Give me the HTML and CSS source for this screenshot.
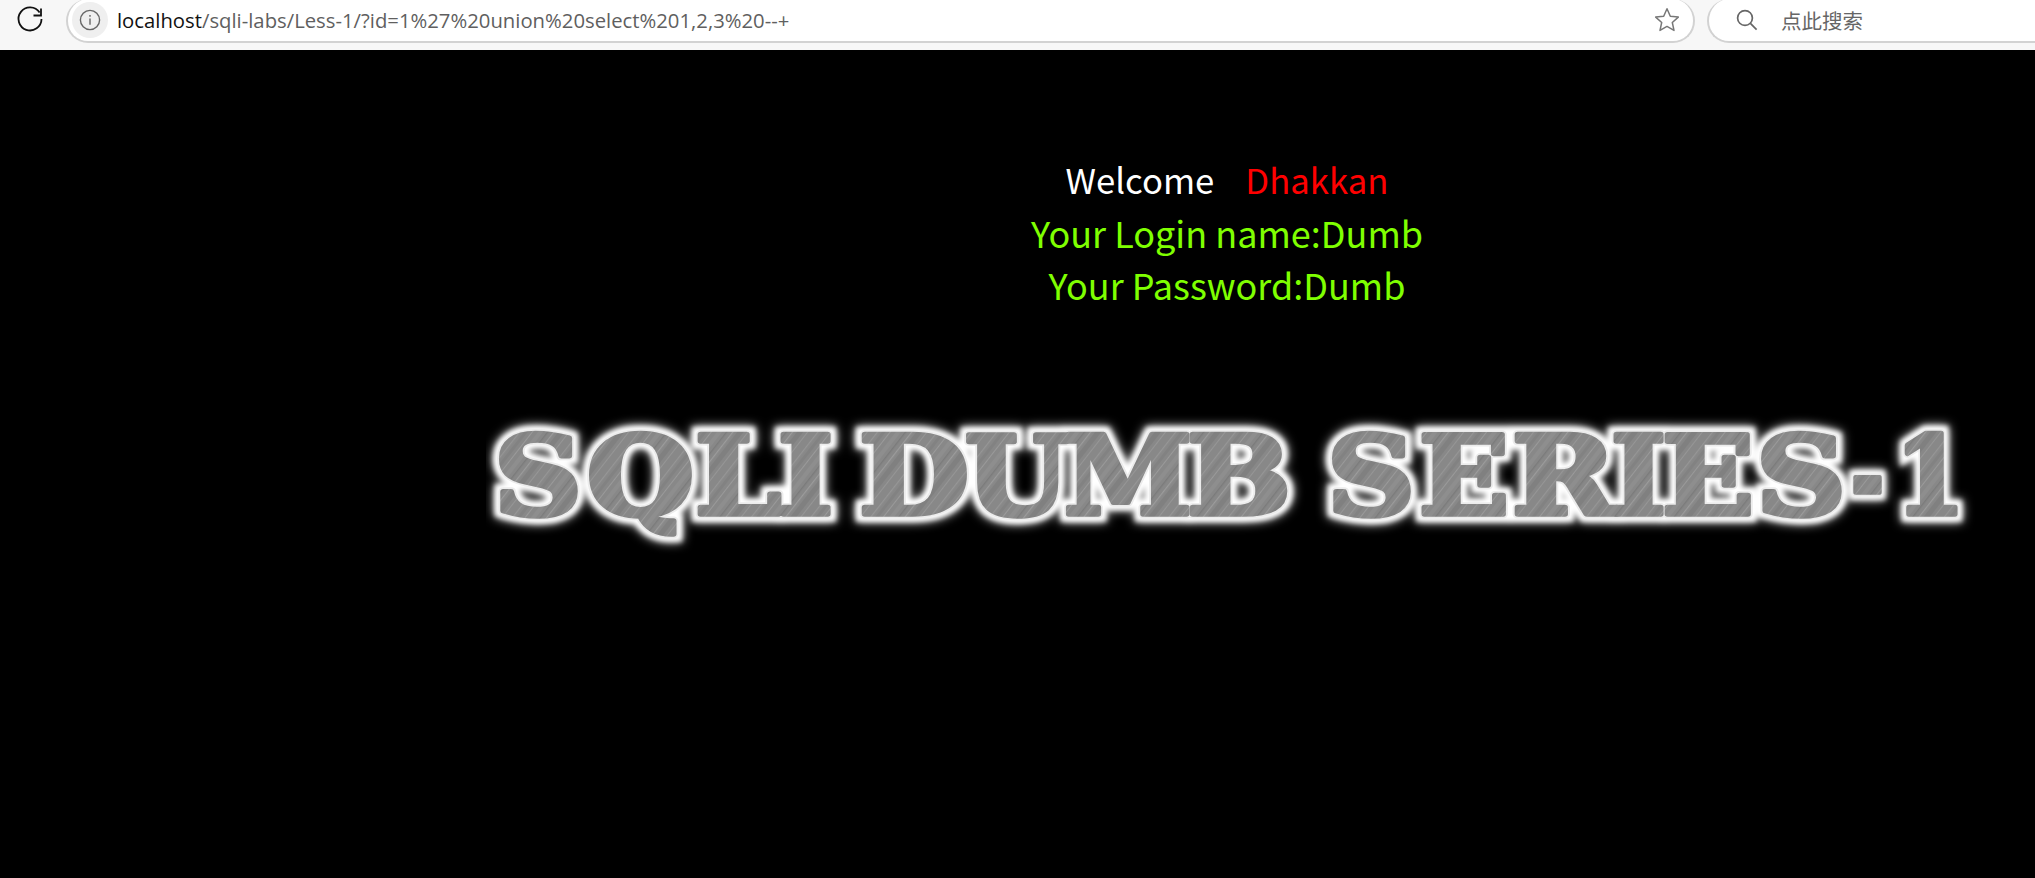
FILE: index.html
```html
<!DOCTYPE html>
<html lang="en">
<head>
<meta charset="utf-8">
<title>Less-1 Dumb</title>
<link rel="stylesheet" href="styles.css">
</head>
<body>
<header class="toolbar">
  <button class="reload" aria-label="Reload">
    <svg width="28" height="28" viewBox="0 0 28 28" fill="none" stroke="#111" stroke-width="1.8">
      <path d="M23.6 7.6A11.5 11.5 0 1 0 25.5 14"/>
      <path d="M25 3.5V10.5H17.5"/>
    </svg>
  </button>
  <div class="address">
    <span class="info">
      <svg width="22" height="22" viewBox="0 0 22 22" fill="none" stroke="#666" stroke-width="1.4">
        <circle cx="11" cy="11" r="9.6"/>
        <path d="M11 9.6v6.2M11 6v1.8"/>
      </svg>
    </span>
    <span class="url"><span class="host">localhost</span>/sqli-labs/Less-1/?id=1%27%20union%20select%201,2,3%20--+</span>
    <svg class="star" width="26" height="26" viewBox="0 0 26 26" fill="none" stroke="#777" stroke-width="1.5" stroke-linejoin="round">
      <path d="M13 1.8l3.3 7.4 8 .9-6 5.4 1.7 7.9-7-4-7 4 1.7-7.9-6-5.4 8-.9z"/>
    </svg>
  </div>
  <div class="search">
    <svg width="24" height="24" viewBox="0 0 24 24" fill="none" stroke="#666" stroke-width="1.7">
      <circle cx="10" cy="10" r="7.4"/>
      <path d="M15.4 15.4l6.2 6.2"/>
    </svg>
    <span class="search-text">点此搜索</span>
  </div>
</header>
<main class="page">
  <div class="message">
    <div class="greeting"><span class="welcome">Welcome</span><span class="name">Dhakkan</span></div>
    <div class="result">Your Login name:Dumb</div>
    <div class="result">Your Password:Dumb</div>
  </div>
  <svg class="logo" width="1520" height="170" viewBox="0 0 1520 170" role="img" aria-label="SQLI DUMB SERIES-1">
    <defs>
      <pattern id="hatch" width="61" height="47" patternUnits="userSpaceOnUse" patternTransform="rotate(-52)">
        <rect width="61" height="47" fill="#888"/>
        <rect y="3" width="61" height="1.2" fill="#969696"/>
        <rect y="7" width="61" height="3" fill="#828282"/>
        <rect y="13" width="61" height="1" fill="#9a9a9a"/>
        <rect y="18" width="61" height="4" fill="#8e8e8e"/>
        <rect y="25" width="61" height="1.4" fill="#7b7b7b"/>
        <rect y="30" width="61" height="1.2" fill="#9c9c9c"/>
        <rect y="34" width="61" height="5" fill="#808080"/>
        <rect y="42" width="61" height="1" fill="#969696"/>
      </pattern>
      <filter id="glow" x="-3%" y="-30%" width="106%" height="160%">
        <feGaussianBlur stdDeviation="2.6" result="near"/>
        <feGaussianBlur in="SourceGraphic" stdDeviation="5.5" result="far"/>
        <feMerge>
          <feMergeNode in="far"/>
          <feMergeNode in="near"/>
        </feMerge>
      </filter>
      <g id="letters" class="letters">
        <text x="8" y="121" textLength="88" lengthAdjust="spacingAndGlyphs">S</text>
        <text x="101" y="121" textLength="107" lengthAdjust="spacingAndGlyphs">Q</text>
        <text x="209" y="121" textLength="86" lengthAdjust="spacingAndGlyphs">L</text>
        <text x="292" y="121" textLength="55" lengthAdjust="spacingAndGlyphs">I</text>
        <text x="373" y="121" textLength="110" lengthAdjust="spacingAndGlyphs">D</text>
        <text x="479" y="121" textLength="104" lengthAdjust="spacingAndGlyphs">U</text>
        <text x="578" y="121" textLength="128" lengthAdjust="spacingAndGlyphs">M</text>
        <text x="701" y="121" textLength="104" lengthAdjust="spacingAndGlyphs">B</text>
        <text x="841" y="121" textLength="88" lengthAdjust="spacingAndGlyphs">S</text>
        <text x="933" y="121" textLength="90" lengthAdjust="spacingAndGlyphs">E</text>
        <text x="1026" y="121" textLength="104" lengthAdjust="spacingAndGlyphs">R</text>
        <text x="1125" y="121" textLength="55" lengthAdjust="spacingAndGlyphs">I</text>
        <text x="1176" y="121" textLength="92" lengthAdjust="spacingAndGlyphs">E</text>
        <text x="1270" y="121" textLength="90" lengthAdjust="spacingAndGlyphs">S</text>
        <text x="1365" y="121" textLength="33" lengthAdjust="spacingAndGlyphs">-</text>
        <text x="1409" y="121" textLength="70" lengthAdjust="spacingAndGlyphs">1</text>
      </g>
    </defs>
    <use href="#letters" class="halo" filter="url(#glow)"/>
    <use href="#letters" class="rim"/>
    <use href="#letters" class="face"/>
  </svg>
</main>
</body>
</html>
```
FILE: styles.css
```css
* { box-sizing: border-box; }
html, body { margin: 0; height: 100%; }
body {
  background: #000;
  overflow: hidden;
  font-family: "Noto Sans", "Noto Sans CJK SC", sans-serif;
}
.toolbar {
  display: flex;
  align-items: flex-start;
  height: 50px;
  background: #f7f7f7;
  overflow: hidden;
}
.reload {
  flex: none;
  display: flex;
  width: 66px;
  height: 44px;
  padding: 5px 0 0 16px;
  border: 0;
  background: none;
}
.address {
  flex: none;
  display: flex;
  align-items: center;
  width: 1629px;
  height: 44px;
  margin-top: -1px;
  padding: 0 13px 0 4px;
  background: #fff;
  border: 2px solid #d2d2d2;
  border-top: 0;
  border-radius: 22px;
}
.info {
  flex: none;
  display: flex;
  align-items: center;
  justify-content: center;
  width: 36px;
  height: 36px;
  border-radius: 50%;
  background: #efefef;
}
.url {
  flex: 1;
  margin-left: 9px;
  font-family: "Open Sans", "Noto Sans", sans-serif;
  font-size: 20.3px;
  color: #5f5f5f;
  white-space: nowrap;
}
.host { color: #111; }
.star { flex: none; }
.search {
  flex: 1;
  display: flex;
  align-items: center;
  height: 44px;
  margin: -1px 0 0 12px;
  padding-left: 26px;
  background: #fff;
  border: 2px solid #d2d2d2;
  border-top: 0;
  border-right: 0;
  border-radius: 22px 0 0 22px;
}
.search-text {
  margin-left: 22px;
  font-size: 20.5px;
  color: #666;
}
.page {
  display: flex;
  flex-direction: column;
  align-items: flex-start;
}
.message {
  width: 816px;
  margin: 103px 0 0 819px;
  text-align: center;
  font-family: "Noto Sans CJK SC", "Noto Sans", sans-serif;
  font-size: 36px;
  line-height: 52.5px;
}
.greeting { font-size: 34.7px; }
.welcome { color: #fff; margin-right: 31px; }
.name { color: #f00; }
.result { color: #7fff00; }
.logo {
  display: block;
  margin: 82px 0 0 486px;
}
.letters {
  font-family: "DejaVu Serif", serif;
  font-weight: 700;
  font-size: 108px;
}
.halo { fill: #fff; stroke: #fff; stroke-width: 15; }
.rim { fill: #eee; stroke: #ececec; stroke-width: 9; stroke-linejoin: round; }
.face { fill: url(#hatch); stroke: url(#hatch); stroke-width: 5.5; stroke-linejoin: round; }
```
